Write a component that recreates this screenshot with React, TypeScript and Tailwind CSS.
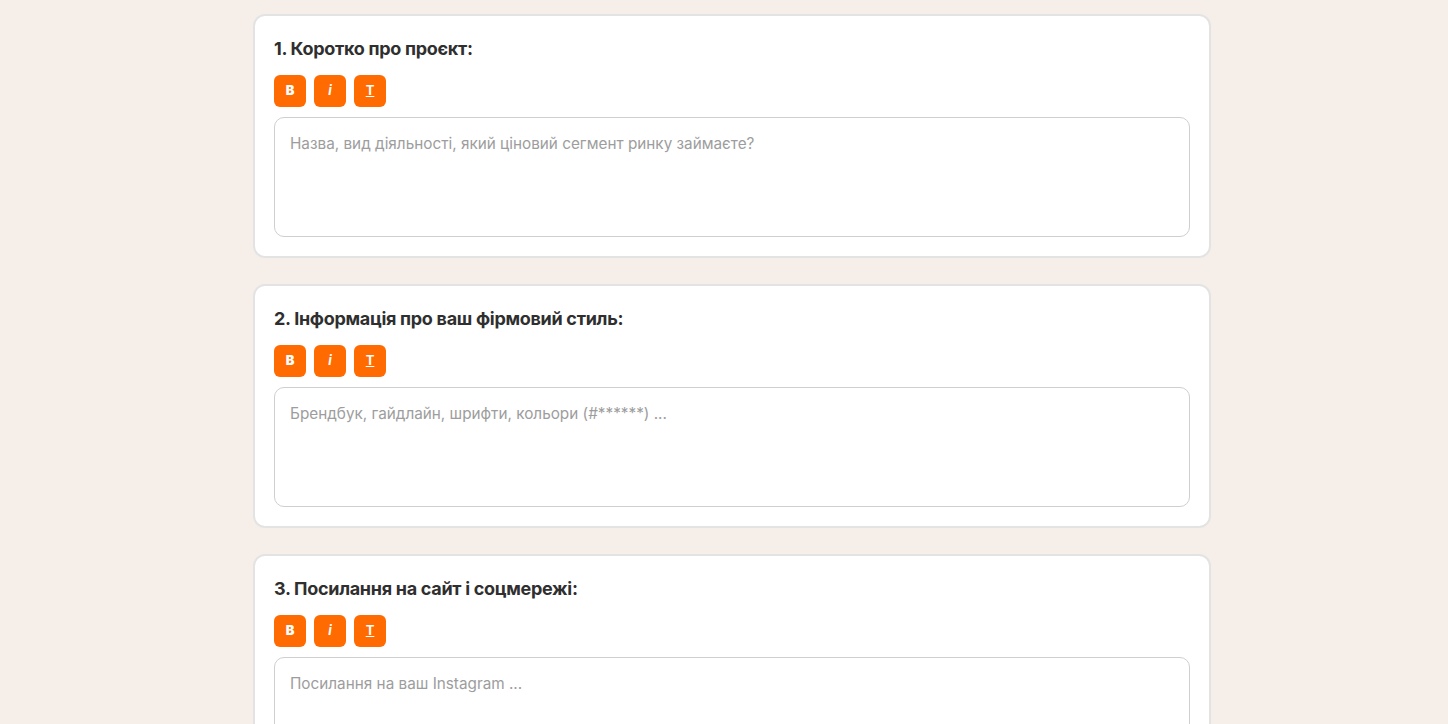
import { useState } from 'react';

const sections = [
  { title: '1. Коротко про проєкт:', placeholder: 'Назва, вид діяльності, який ціновий сегмент ринку займаєте?' },
  { title: '2. Інформація про ваш фірмовий стиль:', placeholder: 'Брендбук, гайдлайн, шрифти, кольори (#******) ...' },
  { title: '3. Посилання на сайт і соцмережі:', placeholder: 'Посилання на ваш Instagram ...' },
];

function Toolbar() {
  return (
    <div className="flex gap-2 mb-[10px]">
      <button className="w-8 h-8 rounded-md bg-[#ff6b00] text-white text-[13px] font-black flex items-center justify-center">B</button>
      <button className="w-8 h-8 rounded-md bg-[#ff6b00] text-white text-[13px] font-bold italic flex items-center justify-center">i</button>
      <button className="w-8 h-8 rounded-md bg-[#ff6b00] text-white text-[13px] font-bold underline flex items-center justify-center">T</button>
    </div>
  );
}

export default function App() {
  const [values, setValues] = useState<string[]>(sections.map(() => ''));

  return (
    <div className="min-h-screen bg-[#f6efe9] pt-[14px] pb-10 pl-4 font-['Inter',sans-serif]">
      <div className="w-[958px] mx-auto flex flex-col gap-[26px]">
        {sections.map((s, i) => (
          <div key={i} className="bg-white border-2 border-[#e3e3e3] rounded-xl p-[19px]">
            <h2 className="text-[18px] leading-[27px] font-bold text-[#2f2f2f] mb-[13px] tracking-[-0.3px]">{s.title}</h2>
            <Toolbar />
            <textarea
              value={values[i]}
              onChange={(e) => setValues(values.map((v, j) => (j === i ? e.target.value : v)))}
              placeholder={s.placeholder}
              className="block w-full h-[120px] resize-none rounded-[10px] border border-[#cfcfcf] px-[15px] py-[14px] text-[15.3px] leading-[24px] text-[#333] placeholder:text-[#9d9d9d] outline-none"
            />
          </div>
        ))}
      </div>
    </div>
  );
}
